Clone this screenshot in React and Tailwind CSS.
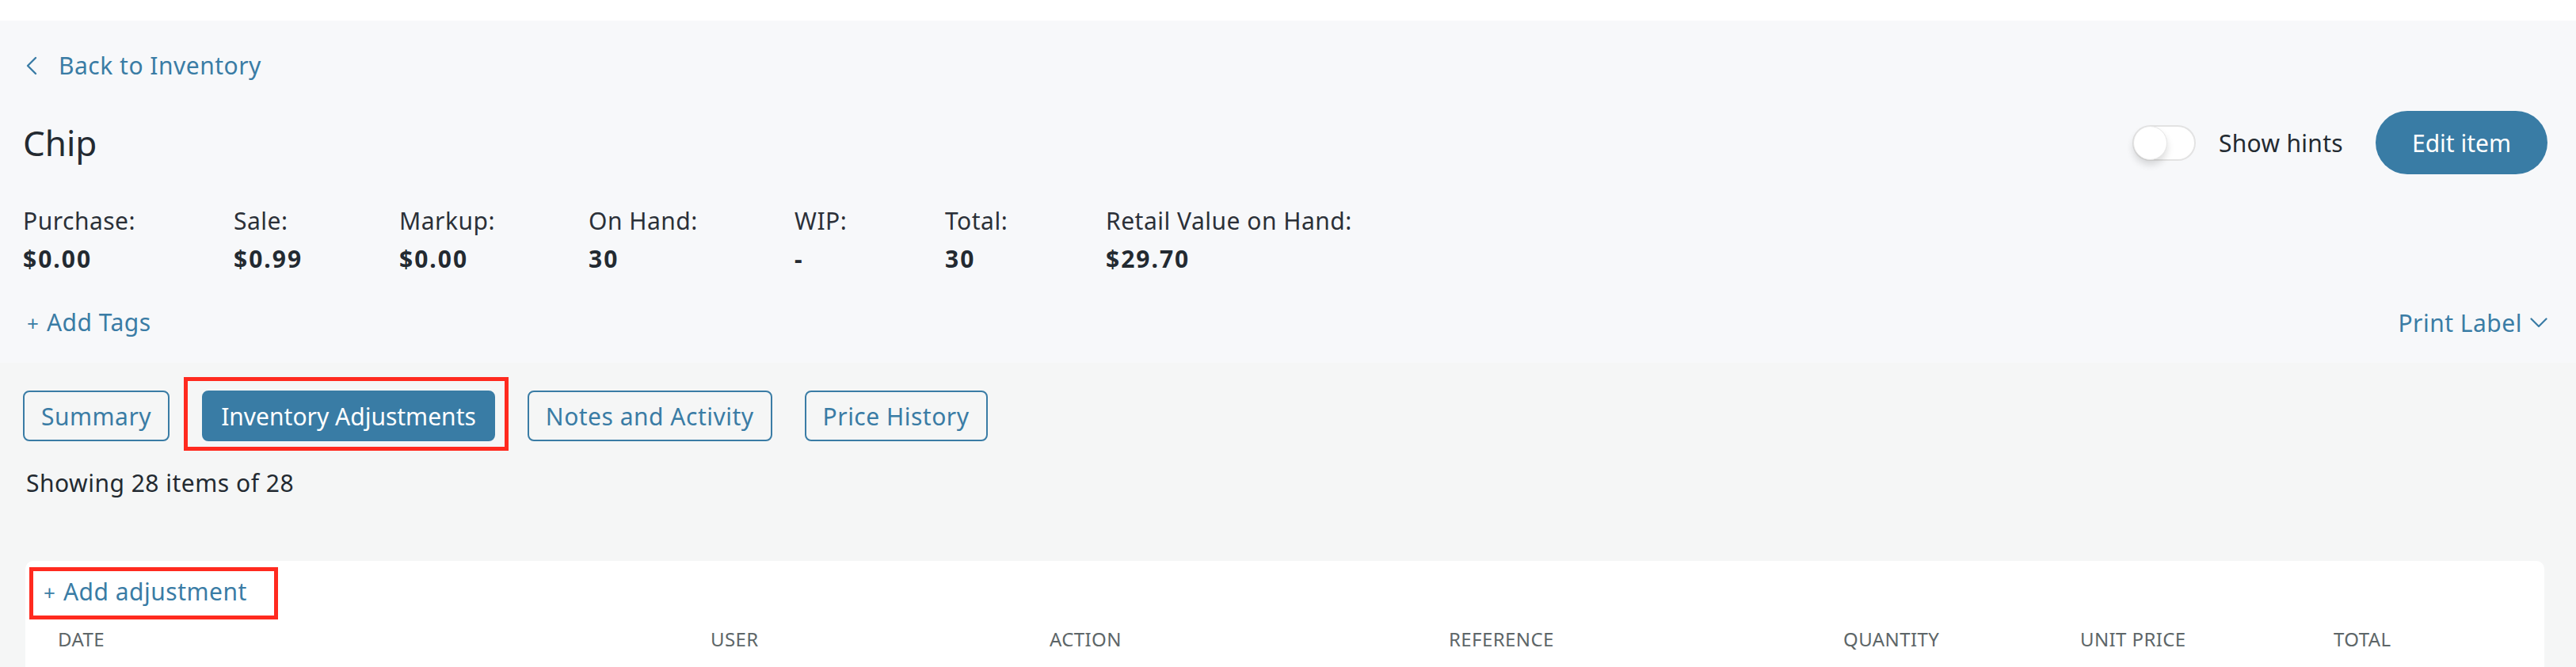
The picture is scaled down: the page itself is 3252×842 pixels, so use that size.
import React, { useState } from "react";

const font = { fontFamily: '"Noto Sans", "Open Sans", sans-serif' };

const stats = [
  { label: "Purchase:", value: "$0.00", w: "w-[266px]" },
  { label: "Sale:", value: "$0.99", w: "w-[209px]" },
  { label: "Markup:", value: "$0.00", w: "w-[239px]" },
  { label: "On Hand:", value: "30", w: "w-[260px]" },
  { label: "WIP:", value: "-", w: "w-[190px]" },
  { label: "Total:", value: "30", w: "w-[203px]" },
  { label: "Retail Value on Hand:", value: "$29.70", w: "w-auto" },
];

const tabs = ["Summary", "Inventory Adjustments", "Notes and Activity", "Price History"];

const columns = [
  { name: "DATE", w: "w-[824px]" },
  { name: "USER", w: "w-[428px]" },
  { name: "ACTION", w: "w-[504px]" },
  { name: "REFERENCE", w: "w-[498px]" },
  { name: "QUANTITY", w: "w-[299px]" },
  { name: "UNIT PRICE", w: "w-[320px]" },
  { name: "TOTAL", w: "flex-1" },
];

const ChevronLeft = () => (
  <svg width="16" height="24" viewBox="0 0 16 24" fill="none" className="mt-[1px]">
    <polyline points="13,2 3,12 13,22" stroke="#3a7ca5" strokeWidth="2.4" strokeLinecap="round" strokeLinejoin="round" />
  </svg>
);

const ChevronDown = () => (
  <svg width="22" height="13" viewBox="0 0 22 13" fill="none">
    <polyline points="1.5,1.5 11,11 20.5,1.5" stroke="#3a7ca5" strokeWidth="2.2" strokeLinecap="round" strokeLinejoin="round" />
  </svg>
);

function Toggle() {
  const [on, setOn] = useState(false);
  return (
    <button
      onClick={() => setOn(!on)}
      className="relative w-[80px] h-[45px] rounded-full bg-white border-2 border-[#e3e3e3]"
    >
      <span
        className={
          "absolute top-[-1px] w-[43px] h-[43px] rounded-full bg-white border border-[#e6e6e6] shadow-[0_6px_10px_rgba(0,0,0,0.14)] " +
          (on ? "right-[-1px]" : "left-[-1px]")
        }
      />
    </button>
  );
}

export default function App() {
  const [active, setActive] = useState("Inventory Adjustments");

  return (
    <div style={font} className="w-full min-h-[842px] bg-white text-[#232a31] overflow-hidden">
      <div className="h-[26px] bg-white" />

      {/* item header */}
      <section className="bg-[#f7f8fa] pl-[29px] pr-[36px] pt-[36px] pb-[30px]">
        <a className="flex items-center gap-[26px] h-[41px] text-[30px] leading-[41px] tracking-[0.5px] text-[#3a7ca5] pl-[3px] cursor-pointer">
          <ChevronLeft />
          <span>Back to Inventory</span>
        </a>

        <div className="flex items-center justify-between mt-[37px] h-[80px]">
          <h1 className="text-[44px] leading-[60px] font-normal text-[#232a31]">Chip</h1>
          <div className="flex items-center">
            <Toggle />
            <span className="ml-[29px] text-[30px] leading-[41px] tracking-[0.3px] text-[#232a31]">Show hints</span>
            <button className="ml-[41px] h-[80px] px-[46px] rounded-full bg-[#397ca5] text-white text-[30px] leading-[41px]">
              Edit item
            </button>
          </div>
        </div>

        <div className="flex mt-[38px]">
          {stats.map((s) => (
            <div key={s.label} className={s.w}>
              <div className="text-[30px] leading-[41px] tracking-[0.5px] text-[#2b3038]">{s.label}</div>
              <div className="mt-[7px] text-[30px] leading-[41px] tracking-[2px] font-bold text-[#232a31]">{s.value}</div>
            </div>
          ))}
        </div>

        <div className="flex items-center justify-between mt-[40px] h-[41px]">
          <a className="flex items-baseline text-[#3a7ca5] pl-[5px] cursor-pointer">
            <span className="text-[26px] leading-[41px]">+</span>
            <span className="ml-[10px] text-[30px] leading-[41px] tracking-[0.5px]">Add Tags</span>
          </a>
          <a className="flex items-center gap-[10px] text-[30px] leading-[41px] tracking-[0.5px] text-[#3a7ca5] cursor-pointer">
            <span>Print Label</span>
            <ChevronDown />
          </a>
        </div>
      </section>

      {/* adjustments tab */}
      <section className="bg-[#f5f6f6] pl-[29px] pr-[36px] pt-[35px] pb-[40px]">
        <div className="flex gap-[41px]">
          {tabs.map((t) =>
            t === active ? (
              <div key={t} className="relative">
                <button
                  onClick={() => setActive(t)}
                  className="h-[64px] px-[22px] rounded-[8px] border-2 border-[#397ca5] bg-[#397ca5] text-white text-[30px] leading-[41px]"
                >
                  {t}
                </button>
                <div className="absolute -top-[17px] -left-[23px] -right-[17px] -bottom-[12px] border-[5px] border-[#ff2a1f] pointer-events-none" />
              </div>
            ) : (
              <button
                key={t}
                onClick={() => setActive(t)}
                className="h-[64px] px-[21px] rounded-[8px] border-2 border-[#3a7ca5] bg-transparent text-[#3a7ca5] text-[30px] leading-[41px] tracking-[0.5px]"
              >
                {t}
              </button>
            )
          )}
        </div>

        <p className="mt-[32px] pl-[4px] text-[30px] leading-[41px] tracking-[0.5px] text-[#232a31]">Showing 28 items of 28</p>

        <div className="mt-[78px] ml-[3px] mr-[4px] bg-white rounded-[10px] pt-[18px] pb-[30px]">
          <div className="pl-[23px]">
            <a className="relative inline-flex items-baseline text-[#3a7ca5] cursor-pointer">
              <span className="text-[26px] leading-[41px]">+</span>
              <span className="ml-[10px] text-[30px] leading-[41px] tracking-[0.5px]">Add adjustment</span>
              <span className="absolute -left-[18px] -top-[10px] -right-[39px] -bottom-[13px] border-[5px] border-[#ff2a1f] pointer-events-none" />
            </a>
          </div>

          <div className="flex mt-[21px] pl-[41px] text-[24px] leading-[33px] tracking-[0.4px] text-[#5d6668]">
            {columns.map((c) => (
              <div key={c.name} className={c.w}>
                {c.name}
              </div>
            ))}
          </div>
        </div>
      </section>
    </div>
  );
}
